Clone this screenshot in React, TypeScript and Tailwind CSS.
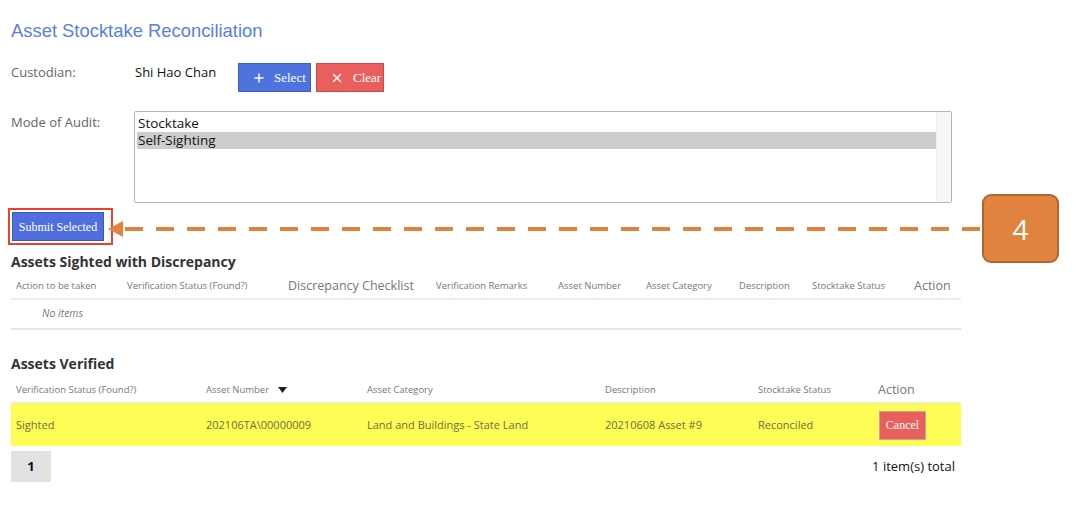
import { Plus, X } from "lucide-react";

const ui = { fontFamily: '"Open Sans", "DejaVu Sans", sans-serif' };
const serif = { fontFamily: '"Liberation Serif", serif' };

const discrepancyCols = [
  { label: "Action to be taken", w: "w-[111px]" },
  { label: "Verification Status (Found?)", w: "w-[161px]" },
  { label: "Discrepancy Checklist", w: "w-[148px]", big: true },
  { label: "Verification Remarks", w: "w-[122px]" },
  { label: "Asset Number", w: "w-[88px]" },
  { label: "Asset Category", w: "w-[93px]" },
  { label: "Description", w: "w-[73px]" },
  { label: "Stocktake Status", w: "w-[102px]" },
  { label: "Action", w: "w-[52px]", big: true },
];

export default function App() {
  return (
    <div className="relative w-[1074px] h-[508px] bg-white overflow-hidden pl-[11px] pt-[19px]" style={ui}>
      {/* Title */}
      <h1
        className="text-[18.4px] leading-[24px] text-[#5a7fe0]"
        style={{ fontFamily: '"Liberation Sans", Arial, sans-serif' }}
      >
        Asset Stocktake Reconciliation
      </h1>

      {/* Custodian */}
      <div className="flex items-start mt-[20px] h-[29px]">
        <div className="w-[124px] pt-[1px] text-[13px] leading-[16px] text-[#666]">Custodian:</div>
        <div className="w-[103px] pt-[1px] text-[13px] leading-[17px] text-[#111]">Shi Hao Chan</div>
        <button
          className="flex items-center gap-[8px] h-[29px] w-[73px] pl-[13px] bg-[#4f73dc] text-white text-[13px] border border-[#3f5fc0]"
          style={serif}
        >
          <Plus size={14} strokeWidth={2.5} />
          Select
        </button>
        <button
          className="ml-[5px] flex items-center gap-[9px] h-[29px] w-[68px] pl-[13px] bg-[#e95f5e] text-white text-[13px] border border-[#c94c4b]"
          style={serif}
        >
          <X size={14} strokeWidth={2.5} />
          Clear
        </button>
      </div>

      {/* Mode of Audit */}
      <div className="flex items-start mt-[19px]">
        <div className="w-[123px] pt-[3px] text-[13px] leading-[16px] text-[#666]">Mode of Audit:</div>
        <div className="flex w-[818px] h-[92px] border border-[#b5b5b5] rounded-[2px] text-[13.5px] leading-[17px] text-[#111]">
          <div className="flex-1 pt-[3px] pl-[2px]">
            <div className="pl-[1px]">Stocktake</div>
            <div className="pl-[1px] bg-[#cdcdcd]">Self-Sighting</div>
          </div>
          <div className="w-[15px] bg-[#f7f7f7] border-l border-[#ececec]" />
        </div>
      </div>

      {/* Submit selected */}
      <div className="mt-[5px] flex items-center">
        <div className="border-2 border-[#e8412f] p-[2px] pr-[7px] -ml-[3px]">
          <button
            className="h-[29px] w-[92px] bg-[#4f6fde] text-white text-[12px] border border-[#3857b8]"
            style={serif}
          >
            Submit Selected
          </button>
        </div>
      </div>

      {/* Assets Sighted with Discrepancy */}
      <h2 className="mt-[8px] text-[14px] leading-[18px] font-bold text-[#333]">Assets Sighted with Discrepancy</h2>
      <div className="w-[950px] mt-[4px]">
        <div className="flex items-center h-[25px] border-b-2 border-[#ececec] text-[#777]">
          {discrepancyCols.map((c) => (
            <div key={c.label} className={`${c.w} pl-[5px] whitespace-nowrap ${c.big ? "text-[12.5px]" : "text-[9.5px]"}`}>
              {c.label}
            </div>
          ))}
        </div>
        <div className="flex items-center h-[30px] border-b-2 border-[#e5e5e5] pl-[31px] text-[10.5px] italic text-[#777]">
          No items
        </div>
      </div>

      {/* Assets Verified */}
      <h2 className="mt-[25px] text-[14px] leading-[18px] font-bold text-[#333]">Assets Verified</h2>
      <div className="w-[950px] mt-[3px]">
        <div className="flex items-center h-[26px] pt-[2px] text-[#777] text-[9.5px] whitespace-nowrap">
          <div className="w-[190px] pl-[5px]">Verification Status (Found?)</div>
          <div className="w-[161px] pl-[5px] flex items-center gap-[9px]">
            Asset Number
            <svg width="9" height="6" viewBox="0 0 9 6">
              <path d="M0 0h9L4.5 6z" fill="#222" />
            </svg>
          </div>
          <div className="w-[238px] pl-[5px]">Asset Category</div>
          <div className="w-[153px] pl-[5px]">Description</div>
          <div className="w-[120px] pl-[5px]">Stocktake Status</div>
          <div className="w-[88px] pl-[5px] text-[12.5px]">Action</div>
        </div>
        <div className="flex items-center h-[44px] bg-[#fdfd55] border-t-2 border-[#f2f2b0] text-[11px] text-[#6f6f44] whitespace-nowrap">
          <div className="w-[190px] pl-[5px]">Sighted</div>
          <div className="w-[161px] pl-[5px]">202106TA\00000009</div>
          <div className="w-[238px] pl-[5px]">Land and Buildings - State Land</div>
          <div className="w-[153px] pl-[5px]">20210608 Asset #9</div>
          <div className="w-[120px] pl-[5px]">Reconciled</div>
          <div className="w-[88px] pl-[6px]">
            <button
              className="h-[29px] w-[47px] bg-[#e95f5e] text-white text-[12px] border border-[#c9a0a0]"
              style={serif}
            >
              Cancel
            </button>
          </div>
        </div>
      </div>

      {/* Pagination */}
      <div className="w-[944px] mt-[5px] flex items-center justify-between">
        <div className="w-[40px] h-[31px] bg-[#e2e2e2] flex items-center justify-center text-[13px] font-bold text-[#111]">
          1
        </div>
        <div className="text-[13px] text-[#111]">1 item(s) total</div>
      </div>

      {/* Callout annotation */}
      <div className="absolute left-[108px] top-[194px] flex items-center h-[69px]">
        <svg width="15" height="16" viewBox="0 0 15 16">
          <path d="M0 8L15 0v16z" fill="#e0833f" />
        </svg>
        <div
          className="w-[857px] h-[4px] ml-[2px]"
          style={{ backgroundImage: "repeating-linear-gradient(to right, #e0833f 0 18px, transparent 18px 31px)" }}
        />
        <div className="w-[77px] h-[69px] rounded-[9px] bg-[#e0833f] border-2 border-[#b4652e] flex items-center justify-center text-white text-[28px]">
          4
        </div>
      </div>
    </div>
  );
}
